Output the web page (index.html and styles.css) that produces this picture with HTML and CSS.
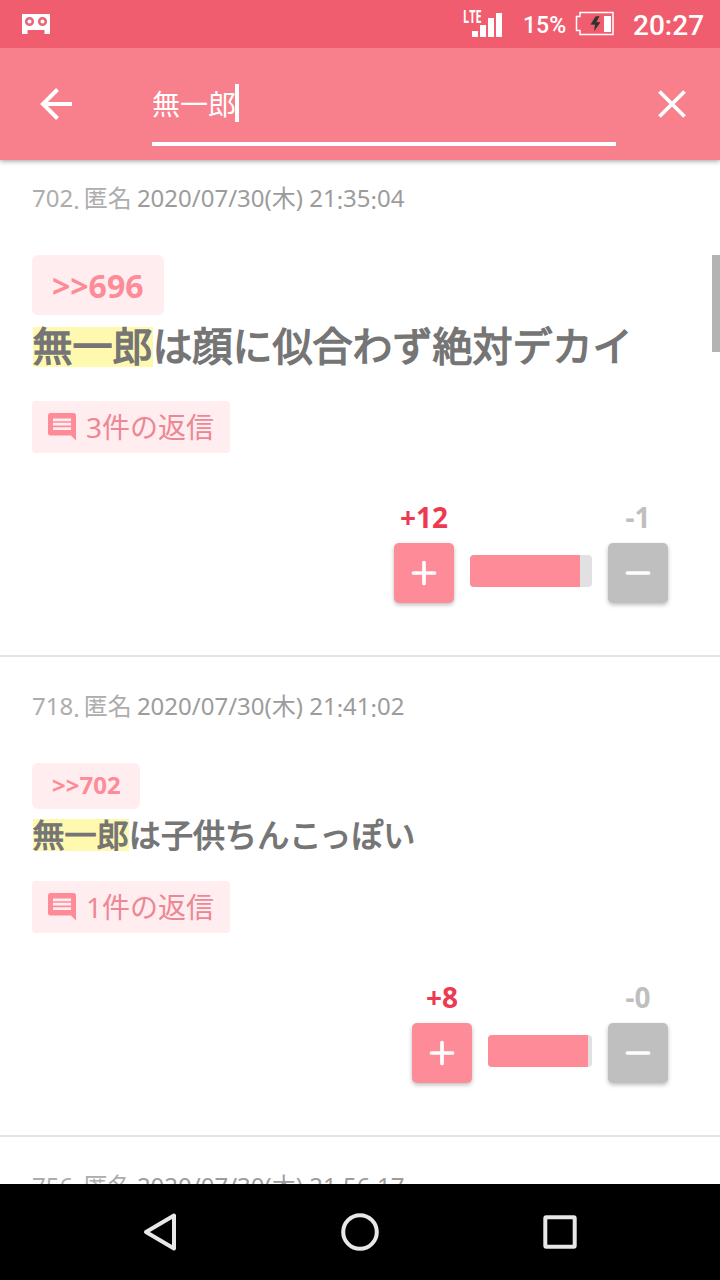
FILE: index.html
```
<!DOCTYPE html>
<html lang="ja">
<head>
<meta charset="utf-8">
<title>無一郎</title>
<link rel="stylesheet" href="styles.css">
</head>
<body>
<div class="screen">
  <div class="status">
    <svg class="status-mail" width="30" height="22" viewBox="0 0 30 22"><path fill="#fff" d="M1 1h28v20h-5.500v-4h-17v4H1z"/><g fill="#fff" stroke="#e8667a" stroke-width="2.600"><circle cx="8.500" cy="8.500" r="3.300"/><circle cx="21.500" cy="8.500" r="3.300"/></g></svg>
    <div class="signal">
      <span class="lte">LTE</span>
      <svg width="32" height="26" viewBox="0 0 32 26"><path fill="#fff" d="M1 20h6v6H1zM9 14h6v12H9zM17 7h6v19h-6zM25 2h6v24h-6z"/></svg>
    </div>
    <span class="percent">15%</span>
    <svg class="battery" width="40" height="26" viewBox="0 0 40 26"><path fill="none" stroke="#fff" stroke-width="1.500" d="M5 1.500h33v22H5v-4H1.500v-14H5z"/><path fill="#fff" d="M29 5h7v16h-7z"/><path fill="#333" d="M20.500 5.500l4-.500-3 6 4 .200-6.500 9 1-6.500-4.500-.200z"/></svg>
    <span class="clock">20:27</span>
  </div>
  <header class="appbar">
    <svg class="back" width="36" height="36" viewBox="0 0 36 36"><path fill="none" stroke="#fff" stroke-width="4" d="M34 18H5M19.500 3.500L5 18l14.500 14.500"/></svg>
    <div class="search"><span class="query">無一郎</span><span class="caret"></span></div>
    <svg class="close" width="32" height="32" viewBox="0 0 32 32"><path fill="none" stroke="#fff" stroke-width="3.800" d="M3.500 3.500l25 25M28.500 3.500l-25 25"/></svg>
  </header>
  <main class="list">
    <article class="post post-first">
      <div class="meta"><span class="author">702<i>.</i> 匿名</span><span>2020/07/30(木) 21<i>:</i>35<i>:</i>04</span></div>
      <div class="quote quote-large">&gt;&gt;696</div>
      <p class="body body-large"><mark>無一郎</mark>は顔に似合わず絶対デカイ</p>
      <div class="replies"><svg width="28" height="28" viewBox="0 0 28 28"><path fill="#fd8b98" fill-rule="evenodd" d="M2.500 0h23A2.500 2.500 0 0 1 28 2.500V27.500l-5-5H2.500A2.500 2.500 0 0 1 0 20V2.500A2.500 2.500 0 0 1 2.500 0zM5 5.500v2.800h18V5.500zM5 9.800v2.800h18V9.800zM5 14.200V17h18v-2.800z"/></svg><span>3件の返信</span></div>
      <div class="votes">
        <div class="vote plus"><span>+12</span><button><svg width="26" height="26" viewBox="0 0 26 26"><path d="M2.500 13h21M13 2.500v21"/></svg></button></div>
        <div class="bar bar-wide"><div class="fill" style="width:90.200%"></div></div>
        <div class="vote minus"><span>-1</span><button><svg width="26" height="26" viewBox="0 0 26 26"><path d="M2.500 13h21"/></svg></button></div>
      </div>
    </article>
    <article class="post">
      <div class="meta"><span class="author">718<i>.</i> 匿名</span><span>2020/07/30(木) 21<i>:</i>41<i>:</i>02</span></div>
      <div class="quote">&gt;&gt;702</div>
      <p class="body"><mark>無一郎</mark>は子供ちんこっぽい</p>
      <div class="replies"><svg width="28" height="28" viewBox="0 0 28 28"><path fill="#fd8b98" fill-rule="evenodd" d="M2.500 0h23A2.500 2.500 0 0 1 28 2.500V27.500l-5-5H2.500A2.500 2.500 0 0 1 0 20V2.500A2.500 2.500 0 0 1 2.500 0zM5 5.500v2.800h18V5.500zM5 9.800v2.800h18V9.800zM5 14.200V17h18v-2.800z"/></svg><span>1件の返信</span></div>
      <div class="votes">
        <div class="vote plus"><span>+8</span><button><svg width="26" height="26" viewBox="0 0 26 26"><path d="M2.500 13h21M13 2.500v21"/></svg></button></div>
        <div class="bar"><div class="fill" style="width:96.200%"></div></div>
        <div class="vote minus"><span>-0</span><button><svg width="26" height="26" viewBox="0 0 26 26"><path d="M2.500 13h21"/></svg></button></div>
      </div>
    </article>
    <article class="post">
      <div class="meta"><span class="author">756<i>.</i> 匿名</span><span>2020/07/30(木) 21<i>:</i>56<i>:</i>17</span></div>
    </article>
    <div class="scrollbar"></div>
  </main>
  <nav class="navbar">
    <svg width="40" height="40" viewBox="0 0 40 40"><path d="M34 3.500v33L6 20z"/></svg>
    <svg width="40" height="40" viewBox="0 0 40 40"><circle cx="20" cy="20" r="16.800"/></svg>
    <svg width="40" height="40" viewBox="0 0 40 40"><rect x="5.300" y="5.300" width="29.400" height="29.400" rx="1"/></svg>
  </nav>
</div>
</body>
</html>
```

FILE: styles.css
```
* { box-sizing: border-box; }
body {
  margin: 0;
  font-family: "Noto Sans", "Noto Sans CJK JP", sans-serif;
  background: #fff;
}
.screen {
  width: 720px;
  height: 1280px;
  display: flex;
  flex-direction: column;
  overflow: hidden;
}
.status {
  height: 48px;
  flex: none;
  display: flex;
  align-items: center;
  padding: 0 16px 0 21px;
  background: #f05d6e;
  color: #fff;
  font-family: Roboto, sans-serif;
  position: relative;
  z-index: 2;
}
.status-mail { margin-right: auto; }
.signal {
  display: flex;
  align-items: flex-start;
  width: 40px;
  height: 32px;
}
.signal svg { margin: 3px 0 0 -11px; flex: none; }
.lte {
  font: 700 17px/17px "Open Sans", sans-serif;
  width: 19px;
  flex: none;
  transform: scaleX(0.64);
  transform-origin: left;
  white-space: nowrap;
}
.percent {
  font-size: 23px;
  font-weight: 500;
  width: 44px;
  margin-left: 20px;
  padding-top: 3px;
  white-space: nowrap;
}
.battery { margin-left: 8px; flex: none; }
.clock {
  font-size: 28px;
  font-weight: 500;
  width: 71px;
  margin-left: 18px;
  padding-top: 2px;
  white-space: nowrap;
}
.appbar {
  height: 112px;
  flex: none;
  display: flex;
  align-items: center;
  padding: 0 32px 0 38px;
  background: #f7808c;
  box-shadow: 0 1px 5px rgba(0, 0, 0, 0.4);
  position: relative;
  z-index: 1;
}
.search {
  display: flex;
  align-items: center;
  width: 464px;
  height: 86px;
  margin: 12px 40px 0 78px;
  padding-top: 4px;
  border-bottom: 4px solid #fff;
  align-self: flex-start;
}
.query { font-size: 28px; line-height: 40px; padding-top: 1px; color: #fff; }
.caret { width: 4px; height: 38px; margin-left: -1px; background: #fff; }
.list {
  position: relative;
  flex: 1;
  min-height: 0;
  overflow: hidden;
}
.post {
  display: flex;
  flex-direction: column;
  align-items: flex-start;
  padding: 31px 52px 52px 32px;
  border-bottom: 2px solid #e4e4e4;
}
.post-first { padding-top: 20px; }
.meta {
  display: flex;
  gap: 6px;
  height: 36px;
  margin-bottom: 39px;
  font-size: 24px;
  line-height: 36px;
  color: #9c9c9c;
  white-space: pre;
}
.author { color: #adadad; word-spacing: -2px; margin-right: -1px; }
.meta i { font-style: normal; position: relative; top: 2px; }
.quote {
  height: 46px;
  padding: 0 19.500px 0 20px;
  border-radius: 6px;
  background: #ffedef;
  color: #fd8b98;
  font-size: 24px;
  font-weight: 700;
  line-height: 43px;
}
.quote-large { height: 60px; padding-right: 20px; font-size: 32px; line-height: 61px; }
.body {
  height: 72px;
  margin: 0;
  color: #757575;
  font-family: "Noto Sans CJK JP", sans-serif;
  font-size: 32px;
  font-weight: 400;
  -webkit-text-stroke: 1.200px #757575;
  letter-spacing: 0.100px;
  text-indent: 0.500px;
  line-height: 48px;
  white-space: nowrap;
}
.body-large {
  height: 86px;
  font-size: 40px;
  letter-spacing: 0;
  line-height: 58px;
  -webkit-text-stroke-width: 1.400px;
}
mark {
  color: inherit;
  background: linear-gradient(#fff9b0, #fff9b0) center calc(50% + 2px) / 100% 1em no-repeat;
}
.body-large mark { background-position-y: calc(50% + 3px); }
.replies {
  display: flex;
  align-items: center;
  gap: 10px;
  width: 198px;
  height: 52px;
  padding-left: 16px;
  border-radius: 4px;
  background: #ffedef;
  color: #ed8794;
  font-size: 28px;
  line-height: 50px;
  white-space: nowrap;
}
.votes {
  display: flex;
  align-items: flex-end;
  align-self: flex-end;
  gap: 16px;
  height: 110px;
  margin-top: 40px;
}
.vote {
  display: flex;
  flex-direction: column;
  align-items: center;
  justify-content: space-between;
  height: 110px;
  font-size: 28px;
  font-weight: 700;
  line-height: 48px;
}
.plus { color: #ee3a50; }
.minus { color: #bfbfbf; }
.vote button {
  display: flex;
  align-items: center;
  justify-content: center;
  width: 60px;
  height: 60px;
  padding: 0;
  border: 0;
  border-radius: 5px;
  background: #fe8b98;
  box-shadow: 0 2px 4px rgba(0, 0, 0, 0.26);
}
.minus button { background: #bfbfbf; }
.vote path { fill: none; stroke: #fff; stroke-width: 3.700; stroke-linecap: round; }
.bar {
  width: 104px;
  height: 32px;
  margin-bottom: 16px;
  border-radius: 4px;
  background: #e1e1e1;
  overflow: hidden;
}
.bar-wide { width: 122px; }
.fill { height: 100%; background: #fe8b98; }
.scrollbar {
  position: absolute;
  top: 95px;
  right: 0;
  width: 8px;
  height: 97px;
  background: #b3b3b3;
}
.navbar {
  height: 96px;
  flex: none;
  display: flex;
  align-items: center;
  justify-content: center;
  gap: 160px;
  background: #000;
}
.navbar svg { fill: none; stroke: #e8e8e8; stroke-width: 4; stroke-linejoin: round; }
```
